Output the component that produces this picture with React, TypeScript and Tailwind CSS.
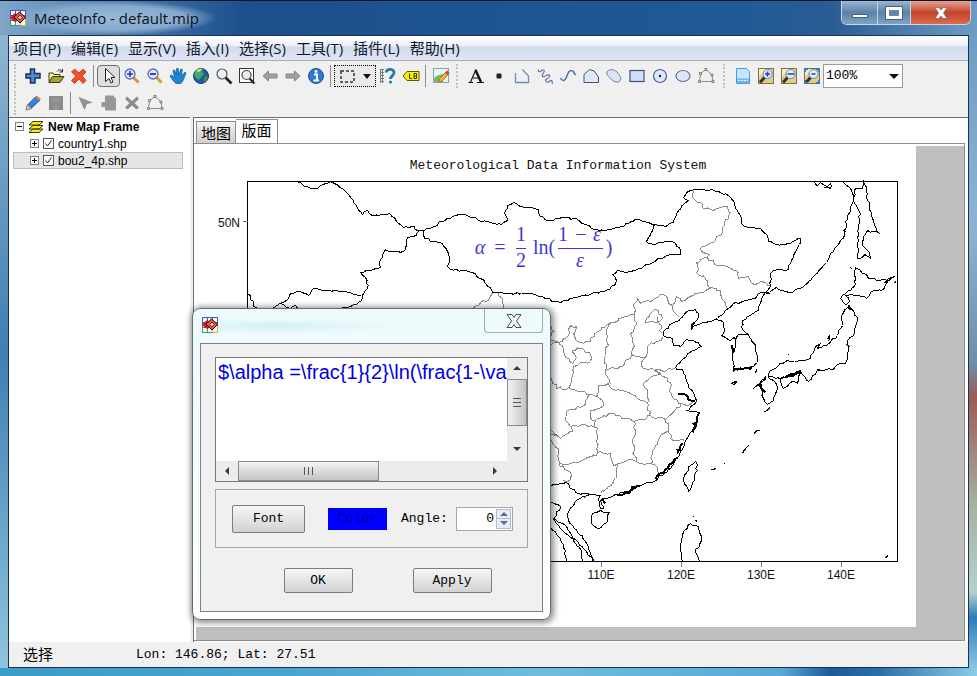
import React, { PropsWithChildren, ReactNode } from 'react'
import clsx from 'clsx'

type Tool = { name: string; icon: ReactNode; active?: boolean }

const menus = ['项目(P)', '编辑(E)', '显示(V)', '插入(I)', '选择(S)', '工具(T)', '插件(L)', '帮助(H)']

const Icon: React.FC<PropsWithChildren> = ({ children }: PropsWithChildren) => (
  <svg viewBox="0 0 18 18" className="w-[18px] h-[18px]" fill="none" aria-hidden="true">
    {children}
  </svg>
)

const AppIcon: React.FC = () => (
  <svg viewBox="0 0 16 16" className="w-4 h-4 shrink-0" aria-hidden="true">
    <rect width="16" height="16" fill="#f4f4ff" />
    <path d="M0 .5h16M.5 0v16M5.500 0v16M10.500 0v16M15.500 0v16M0 5.500h16" stroke="#4a58b8" />
    <path d="M0 10.500h8M0 15.500h10M.5 9v7M5.500 9v7" stroke="#3aa05a" />
    <path d="M10 15.500h6M15.500 9v7M10.500 11v5" stroke="#d0b040" />
    <path d="M0 7.500 5 3l4 3-3 6-3-1z" fill="#c81838" />
    <path d="M4 7 9.500 2l6 5.500L10 13z" fill="#e85a40" stroke="#2a0808" />
    <path d="M7.500 7.500 10 5l2.500 2.500L10 10z" fill="#f8b8a0" stroke="#803020" />
  </svg>
)

const glass = (x: number, y: number, sign: ReactNode) => (
  <>
    <path d={`M${x + 3} ${y + 3}l5.500 5.500`} stroke="#d89a28" strokeWidth="3" />
    <circle cx={x} cy={y} r="5" fill="#dfe6fb" stroke="#5a6ec8" strokeWidth="1.300" />
    {sign}
  </>
)

const nodesShape = (
  <>
    <path d="M2.500 14.500 3.500 6.500 9 2.500l6 5.500 1 6.500z" stroke="#8d8d8d" />
    <path
      d="M1.500 13.500h2v2h-2zM2.500 5.500h2v2h-2zM8 1.500h2v2H8zM14 7h2v2h-2zM15 13.500h2v2h-2z"
      fill="#f4f4f4"
      stroke="#7d7d7d"
    />
  </>
)

const framedGlass = (sign: ReactNode) => (
  <>
    <rect x="1.500" y="1.500" width="15" height="15" fill="#e0cc82" stroke="#7b7248" />
    <path d="M2 2h7L2 10z" fill="#f6efc0" />
    <path d="M3 15.500 8 10" stroke="#33332a" strokeWidth="3" />
    <circle cx="10.500" cy="7" r="4.500" fill="#e2ecff" stroke="#7183b8" />
    {sign}
  </>
)

const fileTools: Tool[] = [
  {
    name: 'New layer',
    icon: <path d="M6.500 2h4v4.500H16v4.500h-5v5H6.500v-5H2V7h4.500z" fill="#4a90d8" stroke="#1d2f55" strokeWidth="1.500" />,
  },
  {
    name: 'Open',
    icon: (
      <>
        <path d="M2 15V6h4l1 1.500h6V9" fill="#f6ee9a" stroke="#3c3a10" />
        <path d="M2 15.500 5.500 9.500H17l-4 6z" fill="#a8a228" stroke="#3c3a10" />
        <path d="M10 4.500c2-2.500 4-2 5 0M15.500 2v3h-3" stroke="#222" />
      </>
    ),
  },
  {
    name: 'Remove',
    icon: <path d="m4.500 2 4.500 4 4-4 3 3-4 4 4 4.500-3 3-4-4.500-4.500 4.500-3-3L6 9 1.500 5z" fill="#f0502c" stroke="#d84020" />,
  },
]

const mapTools: Tool[] = [
  {
    name: 'Select',
    active: true,
    icon: <path d="M5.500 1.500v13L9 11.500l2 4.500 2-1-2-4.500h4z" fill="#fff" stroke="#222" />,
  },
  { name: 'Zoom in', icon: glass(7, 7, <path d="M7 4v6M4 7h6" stroke="#2338a8" strokeWidth="1.600" />) },
  { name: 'Zoom out', icon: glass(7, 7, <path d="M4 7h6" stroke="#2338a8" strokeWidth="1.800" />) },
  {
    name: 'Pan',
    icon: (
      <path
        d="M7 16.500C5 15 2.500 11.500 1 9l1.500-1L5.500 10 4 3.500l1.700-.5L7.500 8V1.500h1.800L10 8l1.700-6 1.600.5L12.500 9 16 5l1 1.200c-1.500 3-2.500 8-5 10.300z"
        fill="#1e86d0"
        stroke="#0e5c9c"
        strokeWidth=".7"
      />
    ),
  },
  {
    name: 'Full extent',
    icon: (
      <>
        <circle cx="9" cy="9" r="7.500" fill="#2458a8" stroke="#1a3a70" />
        <path d="M3 5c2-3 6-4 8-3l-1 3 2 2-3 3-2 3-3-2-2-3z" fill="#3fae58" />
        <path d="m12 10 4-1c0 3-2 6-4 6z" fill="#38904c" />
        <path d="M4 4c2-2 4-2.500 6-2L7 5z" fill="#b6ecc0" />
      </>
    ),
  },
  {
    name: 'Zoom to layer',
    icon: (
      <>
        <path d="m10.500 10.500 6 6" stroke="#222" strokeWidth="2.600" />
        <circle cx="7" cy="7" r="5" fill="#e9f2f8" stroke="#555" strokeWidth="1.200" />
      </>
    ),
  },
  {
    name: 'Zoom to extent',
    icon: (
      <>
        <rect x="1.500" y="1.500" width="14" height="14" fill="#fff" stroke="#333" />
        <path d="m11 11 5.500 5.500" stroke="#222" strokeWidth="2.200" />
        <circle cx="8.500" cy="8" r="4.500" fill="#e3ecef" stroke="#444" strokeWidth="1.200" />
      </>
    ),
  },
  { name: 'Back', icon: <path d="M2 9l5.500-5v3H16v4H7.500v3z" fill="#a2a2a2" stroke="#858585" /> },
  { name: 'Forward', icon: <path d="M16 9l-5.500-5v3H2v4h8.500v3z" fill="#a2a2a2" stroke="#858585" /> },
  {
    name: 'Identify',
    icon: (
      <>
        <circle cx="9" cy="9" r="7.500" fill="#2f76d4" stroke="#1b4f9e" />
        <path d="M7 7.500h3V13M6.500 13.500h5.500" stroke="#fff" strokeWidth="2" />
        <circle cx="9" cy="4.500" r="1.400" fill="#fff" />
      </>
    ),
  },
]

const labelTools: Tool[] = [
  {
    name: 'Measure',
    icon: (
      <>
        <path d="M1.500 2v14M3.500 2v14M1 2.500h4M1 5.500h4M1 8.500h4M1 11.500h4M1 14.500h4" stroke="#6f8288" />
        <path d="M7 5.500C8 1 15.500 1.500 15 6c-.3 2.500-3.500 3-3.500 6" stroke="#1f7fa8" strokeWidth="2.800" />
        <circle cx="11.500" cy="15" r="1.600" fill="#1f7fa8" />
      </>
    ),
  },
  {
    name: 'Label',
    icon: (
      <>
        <path d="M1 9l4-4.500h12v9H5z" fill="#f8f000" stroke="#5a5600" />
        <path d="M7.500 6.500v5H10M12 6.500v5h2.500v-5zM12 9h2.500" stroke="#333" />
      </>
    ),
  },
]

const imageTools: Tool[] = [
  {
    name: 'Edit image',
    icon: (
      <>
        <rect x="1.500" y="1.500" width="15" height="14" fill="#eaf5fb" stroke="#8d9ea8" />
        <path d="M2 11c4-4 6-3 9-4v8H2z" fill="#6fc06a" />
        <path d="m6.500 14.500 1-3 7-7 2.500 2-7.500 8z" fill="#f4b932" stroke="#a8701c" />
        <path d="m13 6 2-2.500 2.500 2-2 2.500z" fill="#d8423a" />
      </>
    ),
  },
]

const drawTools: Tool[] = [
  {
    name: 'Text',
    icon: (
      <>
        <path d="M1.500 15.500H6M10 15.500h7M3.500 15 9 2.500M6 11h6" stroke="#111" strokeWidth="1.200" />
        <path d="M8.500 3 14 15" stroke="#111" strokeWidth="2.400" />
      </>
    ),
  },
  { name: 'Point', icon: <rect x="6.500" y="6.500" width="5" height="5" rx="1" fill="#222" /> },
  { name: 'Polyline', icon: <path d="M2.500 6v9.500h13V9L9.500 2.500" stroke="#6f8cc0" strokeWidth="1.300" /> },
  {
    name: 'Freehand',
    icon: (
      <path
        d="M2.500 2.500c-1 2 1 3 2.500 1.500s4-1.500 3 1-3 3-1.500 4.500S11 7 13 8s-.5 3-2.500 4 0 4 2 3 3-2.500 3.500-1-.5 2.500 1 2"
        stroke="#4f6f98"
        strokeWidth="1.100"
      />
    ),
  },
  { name: 'Curve', icon: <path d="M1.500 11c2 4 4.500 3 6-1s3-8 6-6c2 1 2 3 3 4" stroke="#4470b8" strokeWidth="1.500" /> },
  { name: 'Polygon', icon: <path d="M2 15.500V7.500l5.500-5L12 4l4.500 6v5.500z" fill="#dfe8f8" stroke="#44516e" /> },
  {
    name: 'Curve polygon',
    icon: <path d="M2 5c1-3 7-3 10 0s5 7 3 9-6 1-8-1-6-5-5-8z" fill="#dbe4f6" stroke="#6b7da8" />,
  },
  { name: 'Rectangle', icon: <rect x="2" y="3.500" width="14" height="11" fill="#d3def5" stroke="#3b4f8c" strokeWidth="1.200" /> },
  {
    name: 'Circle',
    icon: (
      <>
        <circle cx="9" cy="9" r="6.500" fill="#dde6f8" stroke="#4b5f92" strokeWidth="1.200" />
        <circle cx="9" cy="9" r="1.200" fill="#223" />
      </>
    ),
  },
  { name: 'Ellipse', icon: <ellipse cx="9" cy="9" rx="7" ry="5.500" fill="#dde6f8" stroke="#5c6c98" strokeWidth="1.200" /> },
  { name: 'Edit vertices', icon: nodesShape },
]

const layoutTools: Tool[] = [
  {
    name: 'Page setup',
    icon: (
      <>
        <path d="M2.500 1.500h10l3 3v12h-13z" fill="#c8e6fb" stroke="#4a9be0" />
        <path d="M3 11.500h12v4.500H3z" fill="#6fb4ee" />
        <path d="M4 13.500h10" stroke="#e6f4ff" strokeDasharray="2 1" />
      </>
    ),
  },
  { name: 'Page zoom in', icon: framedGlass(<path d="M10.500 4.500v5M8 7h5" stroke="#1f3cc0" strokeWidth="1.600" />) },
  { name: 'Page zoom out', icon: framedGlass(<path d="M7.500 7H14" stroke="#2a62b8" strokeWidth="1.800" />) },
  {
    name: 'Fit page',
    icon: framedGlass(
      <path d="M2 5V2h3M16 5V2h-3M2 13v3h3M16 13v3h-3M8.500 7h4" stroke="#3a7ab8" strokeWidth="1.800" />,
    ),
  },
]

const editTools: Tool[] = [
  {
    name: 'Toggle editing',
    icon: (
      <>
        <path d="m2 16 1.500-5L12 2.500 16 6l-9 8.500z" fill="#2f86dc" stroke="#1d5ca0" />
        <path d="m2 16 1.500-5 3.500 3.500z" fill="#f1c48a" stroke="#b98038" strokeWidth=".6" />
        <path d="m11.500 3 1.500-1.500 4 3.500-1.500 1.500z" fill="#f08848" />
      </>
    ),
  },
  {
    name: 'Save edits',
    icon: (
      <>
        <rect x="2" y="2" width="14" height="14" fill="#8b8b8b" />
        <path d="M5 3h8v5H5zM6 11h6v5H6z" fill="#949494" />
      </>
    ),
  },
]

const featureTools: Tool[] = [
  { name: 'Edit feature', icon: <path d="M1.500 3 16 8.500 10 10l-2.500 6z" fill="#8f8f8f" /> },
  { name: 'New feature', icon: <path d="M5 1.500h8l3 3v12H5V13H1.500V8H5z" fill="#979797" /> },
  {
    name: 'Delete feature',
    icon: <path d="m4 2.500 5 4.500 5-4.500L16 5l-4.500 4 4.500 4.500-2.500 2L9 11.500l-4.500 4-2.500-2L6.500 9 2 5z" fill="#8b8b8b" />,
  },
  { name: 'Feature vertices', icon: nodesShape },
]

const ToolGroup: React.FC<{ tools: Tool[] }> = ({ tools }) => (
  <div className="flex shrink-0">
    {tools.map((tool) => (
      <button
        key={tool.name}
        aria-label={tool.name}
        className={clsx(
          'w-[23px] h-[22px] flex items-center justify-center',
          tool.active && 'rounded-sm border border-[#6e6e6e] bg-[#dedede]',
        )}
      >
        <Icon>{tool.icon}</Icon>
      </button>
    ))}
  </div>
)

const Grip: React.FC = () => <div className="w-1 h-6 shrink-0 border-l-2 border-dotted border-[#c0c0c0]" />

const Separator: React.FC = () => <div className="w-px h-[22px] mx-[3px] shrink-0 bg-[#8e8e8e]" />

const coasts = [
  '289,181 300,182 307,186 310,188 317,188 323,184 330,181 334,183 342,188 350,197 357,208 362,214 367,210 372,215 384,214 389,213 394,217 396,221 403,227 414,226 417,230 424,230 434,226 441,221 452,216 462,214 475,217 478,220 490,222 501,224 507,220 504,212 507,205 513,202 522,206 530,207 538,209 540,216 547,220 558,218 565,217 577,219 585,224 594,229 605,230 618,227 628,223 638,219 648,222 655,224 665,226 673,222 676,213 684,203 688,200 683,197 686,192 690,190 700,189 712,189 718,191 728,195 734,204 740,215 742,224 750,227 760,228 767,235 768,241 775,244 785,244 795,240 800,238 799,244 794,253 790,263 786,270 780,269 773,270 770,273 770,285 765,292 758,293 755,298 746,300 738,303 735,302 728,308 717,318',
  '424,230 423,235 430,241 442,243 447,251 449,260 447,266 450,269 462,270 472,272 484,280 492,292 510,293 530,293 545,298 560,302 575,297 590,294 604,291 614,285 616,280 612,274 617,270 625,272 635,270 650,263 660,258 670,254 680,254 680,250 675,243 668,241 655,244 648,243 646,241 650,233 654,224',
  '419,230 413,236 406,239 405,250 400,252 385,250 385,249 379,262 380,267 375,268 360,272 365,277 367,288 362,295 361,300 350,306 340,308',
  '361,295 345,291 325,290 313,288 308,295 298,291 290,293 288,298 278,304 272,308',
  '247,290 250,299 255,307 265,308',
  '281,303 290,308 295,305 299,309',
  '770,291 776,287 782,290 792,292 802,287 812,277 826,262 830,253 840,240 844,235 845,221 850,208 853,200 851,190 848,186 842,181',
  '853,200 859,211 858,235 857,258 860,258 864,254 870,258 869,252 862,245 863,236 867,230 879,233 874,225 871,213 867,200 866,190 863,181 862,188 855,188 853,200',
  '814,181 817,185 820,182 826,186 830,183 830,188 824,187',
  '855,267 855,284 850,290 843,294 840,298 845,304 849,301 845,295 850,294 858,295 866,298 870,292 884,288 888,280 880,280 868,278 860,270 855,267',
  '884,283 888,278 894,276 886,281 884,283',
  '847,307 841,315 842,325 837,335 828,343 817,348 819,344 815,346 808,359 785,361 770,370 768,376 780,378 800,370 803,375 808,381 816,371 818,369 833,369 836,365 845,363 847,358 848,350 847,340 854,333 857,320 852,309 847,307',
  '768,377 775,382 777,388 773,400 767,404 763,398 761,388 758,384 765,376',
  '780,378 783,388 792,381 797,383 800,373 790,374 780,378',
  '765,292 760,303 758,310 742,320 741,326 748,334 755,347 757,362 753,366 740,368 733,371 733,362 732,352 735,343 734,337 730,340 721,335 724,330 723,322 716,319',
  '735,340 738,334 748,334',
  '717,318 705,322 695,325 691,329 694,322 698,316 695,309 688,310 680,318 672,323 663,331 663,335 672,338 673,345 680,346 686,339 698,342 701,346 692,350 683,358 675,367 683,371 688,384 693,393 696,400 695,403 687,410 698,412 695,425 685,440 679,455 672,465 655,480 640,485 630,490 618,494 605,498 600,500 603,508 600,508 598,500 600,495 590,494 577,499 567,513 568,520 577,532 585,541 593,561',
  '695,461 690,465 683,480 688,491 694,480 697,464 695,461',
  '592,513 591,523 598,528 605,523 609,512 600,510 592,513',
  '682,561 680,547 684,530 690,523 698,526 701,540 695,552 699,561',
  '551,485 565,482 575,492 590,494',
  '551,502 560,506 556,515 553,518 565,525 572,537 585,550 593,561',
  '553,518 560,528 570,537 581,550 582,561',
  '551,528 558,536 565,550 566,561',
]

// drawn wider than the borders, these are the ragged bits of shoreline
const ragged = [
  '678,393 687,396 695,400',
  '699,412 696,422 692,432',
  '682,443 678,453',
  '677,457 668,466 655,479',
  '640,486 632,486 629,492 616,494',
  '733,370 740,368 751,366',
  '760,384 765,392',
  '848,305 852,308',
  '769,292 766,293',
  '603,498 605,503',
  '691,326 694,322',
  '732,345 734,352',
  '785,376 800,371',
  '816,369 819,369',
]

const provinces = [
  '473,308 480,302 488,300 492,292',
  '498,292 502,301 503,308',
  '693,191 692,197 700,202 706,208 715,209 724,206 730,212 724,222 722,232 715,240 708,244 700,248 703,252 709,254 706,257 696,262 698,274 707,280 709,288 700,292 690,296 681,301 676,296 672,305 668,303 666,296 660,294 650,301 640,303 637,298 634,303 634,314 625,316 611,322 607,324 597,331 590,341 580,342 574,335 576,326 570,325 568,335 562,341 551,344',
  '707,257 714,264 725,266 736,270 738,278 748,276 754,284 762,281 770,285',
  '709,288 720,290 723,300 727,308',
  '672,306 674,312 679,317',
  '611,322 606,330 608,345 605,355 605,370 610,384',
  '634,314 636,322 630,333 634,345 631,354 622,366 605,370',
  '631,354 645,357 648,345 662,337',
  '645,357 641,365 654,370 665,371 675,367',
  '645,322 652,311 658,310 662,318 655,322 645,322',
  '657,317 661,325 659,330 662,333',
  '551,326 554,331 551,336',
  '551,340 562,345 564,355 572,363 576,357 572,350 580,348 589,352 590,361 573,366 572,375 568,387',
  '551,378 556,388 568,387 580,391 597,396 602,400 602,406 590,410 592,420 595,420',
  '597,396 598,385 608,383 612,389 630,393 640,400 647,402 649,415',
  '654,370 660,373 653,375 643,383 647,392 649,402',
  '654,370 670,382 670,392 678,403 688,405 695,400',
  '595,420 610,413 625,418 633,421 635,430 632,440 634,455 636,461',
  '633,421 650,415 665,419 675,410 680,404',
  '665,419 668,430 660,435 655,445 650,463 657,467 658,477',
  '668,430 673,440 684,441',
  '595,420 597,450 596,455 585,458 570,463 560,463',
  '588,395 585,404 566,411 565,420 570,426 585,424 595,427',
  '551,430 560,438 572,431 570,426',
  '551,440 558,448 559,463 570,472 569,480 563,480',
  '551,434 558,436',
  '597,452 610,453 613,465 632,459 637,462 650,463',
  '617,465 615,478 608,486 600,493',
]

const islets = [
  '732,382 736,381 734,384 731,383',
  '827,339 829,335 829,339 827,341',
  '787,354 788,354',
  '755,373 756,369',
  '764,411 767,410 769,407',
  '753,434 756,430 759,430',
  '742,453 745,448 748,445',
  '723,464 724,463',
  '710,469 716,468',
  '692,517 693,516',
  '695,520 697,521',
  '885,558 887,555',
  '752,389 760,383 766,378',
  '850,267 852,269',
  '894,282 896,281',
]

// Splits every segment into short steps and nudges them, so borders look surveyed
const roughen = (line: string, amount: number) => {
  const pts = line.split(' ').map((p) => p.split(',').map(Number))
  const out: string[] = [`M${pts[0][0]} ${pts[0][1]}`]
  let seed = pts[0][0] * 31 + pts[0][1] * 17
  const noise = () => {
    seed = (seed * 16807) % 2147483647
    return (seed / 2147483647 - 0.5) * 2 * amount
  }
  for (let i = 1; i < pts.length; i++) {
    const [x0, y0] = pts[i - 1]
    const [x1, y1] = pts[i]
    const steps = Math.max(1, Math.round(Math.hypot(x1 - x0, y1 - y0) / 3))
    for (let s = 1; s < steps; s++) {
      const t = s / steps
      out.push(`L${(x0 + (x1 - x0) * t + noise()).toFixed(1)} ${(y0 + (y1 - y0) * t + noise()).toFixed(1)}`)
    }
    out.push(`L${x1} ${y1}`)
  }
  return out.join('')
}

const MapPage: React.FC = () => (
  <svg viewBox="196 146 720 481" preserveAspectRatio="xMinYMin meet" className="block w-full h-full bg-white">
    <text x="558" y="169" textAnchor="middle" className="font-['Liberation_Mono',monospace] text-[13px]" fill="#111">
      Meteorological Data Information System
    </text>
    <g fill="none" shapeRendering="crispEdges" transform="translate(.5 .5)">
      {provinces.map((line) => (
        <path key={line} d={roughen(line, 1.6)} stroke="#8a8a8a" />
      ))}
      {coasts.map((line) => (
        <path key={line} d={roughen(line, 1.1)} stroke="#000" />
      ))}
      {ragged.map((line) => (
        <path key={line} d={roughen(line, 2)} stroke="#000" strokeWidth="2" />
      ))}
      {islets.map((line) => (
        <path key={line} d={roughen(line, 0.6)} stroke="#000" strokeWidth="1.200" />
      ))}
      <rect x="247" y="181" width="650" height="380" stroke="#000" />
      <path d="M242 221h5M601 561v5M681 561v5M761 561v5M841 561v5" stroke="#777" />
    </g>
    <g className="font-['Liberation_Sans',sans-serif] text-xs" fill="#111">
      <text x="240" y="227" textAnchor="end">50N</text>
      <text x="601" y="579" textAnchor="middle">110E</text>
      <text x="681" y="579" textAnchor="middle">120E</text>
      <text x="761" y="579" textAnchor="middle">130E</text>
      <text x="841" y="579" textAnchor="middle">140E</text>
    </g>
    <g className="font-['Liberation_Serif',serif] text-[20px]" fill="#3f38d8" textAnchor="middle">
      <text x="480" y="254" className="italic">α</text>
      <text x="500" y="254">=</text>
      <text x="521" y="241">1</text>
      <text x="521" y="267">2</text>
      <text x="544" y="254">ln(</text>
      <text x="563" y="241">1</text>
      <text x="581" y="241">−</text>
      <text x="597" y="241" className="italic">ε</text>
      <text x="580" y="267" className="italic">ε</text>
      <text x="609" y="254">)</text>
      <path d="M516 248.500h10M558 248.500h45" stroke="#3f38d8" />
    </g>
  </svg>
)

const layers = ['country1.shp', 'bou2_4p.shp']

const Expander: React.FC<{ open?: boolean }> = ({ open }) => (
  <svg viewBox="0 0 9 9" className="w-[9px] h-[9px] shrink-0" fill="none" aria-hidden="true">
    <rect x=".5" y=".5" width="8" height="8" fill="#fff" stroke="#808080" />
    <path d={open ? 'M2 4.500h5' : 'M2 4.500h5M4.500 2v5'} stroke="#000" />
  </svg>
)

const LayerTree: React.FC = () => (
  <aside className="w-[181px] shrink-0 border-t border-[#6e6e6e] bg-white font-['Liberation_Sans',sans-serif] text-xs text-black">
    <div className="flex items-center h-[17px] pl-1.5">
      <Expander open />
      <svg viewBox="0 0 16 14" className="w-4 h-3.5 ml-1 mr-1 shrink-0" aria-hidden="true">
        <path
          d="M1 12.500 5 9h10l-4 3.500zM1 9 5 5.500h10L11 9zM1 5l4-3.500h10L11 5z"
          fill="#f6ee1c"
          stroke="#3c3800"
        />
      </svg>
      <span className="font-bold">New Map Frame</span>
    </div>
    {layers.map((layer, i) => (
      <div
        key={layer}
        className={clsx(
          'flex items-center h-[17px] ml-1 mr-[7px] pl-[17px]',
          i === 1 && 'bg-[#e6e6e6] outline-1 -outline-offset-1 outline-[#bdbdbd]',
        )}
      >
        <Expander />
        <label className="flex items-center ml-1 gap-1">
          <span className="relative flex">
            <input
              type="checkbox"
              defaultChecked
              className="appearance-none w-[11px] h-[11px] border border-[#555] bg-white"
            />
            <svg viewBox="0 0 11 11" className="absolute inset-0 w-[11px] h-[11px]" fill="none" aria-hidden="true">
              <path d="M2.500 5.500 4.500 8l4-5.500" stroke="#222" />
            </svg>
          </span>
          {layer}
        </label>
      </div>
    ))}
  </aside>
)

const TitleBar: React.FC = () => (
  <header className="flex h-[34px] shrink-0 items-start pl-2.5 pr-1.5 bg-[linear-gradient(to_right,#7fa6c8,#4a7cb0_12%,#1c4f8c_25%,#1f5a96_75%,#2a5c94_85%,#6f9cc4)]">
    <div className="flex items-center h-[34px] gap-2 pr-4 bg-[radial-gradient(ellipse_at_center,#98b8d6_0%,#86aacd_50%,transparent_72%)]">
      <AppIcon />
      <h1 className="font-['Open_Sans',sans-serif] text-[15px] text-[#0b1220]">MeteoInfo - default.mip</h1>
    </div>
    <div className="flex ml-auto h-6 rounded-b-md border border-t-0 border-[#c5d8ea] overflow-hidden">
      <button
        aria-label="Minimize"
        className="w-9 border-r border-[#c5d8ea] bg-linear-to-b from-[#9bb6d1] via-[#5b82ab] to-[#7fa3c6] flex items-end justify-center pb-1.5"
      >
        <span className="w-4 h-1 bg-white border border-[#4b5f78]" />
      </button>
      <button
        aria-label="Maximize"
        className="w-[33px] border-r border-[#c5d8ea] bg-linear-to-b from-[#9bb6d1] via-[#5b82ab] to-[#7fa3c6] flex items-center justify-center"
      >
        <span className="w-4 h-3 border-[3px] border-white outline-1 outline-[#4b5f78]" />
      </button>
      <button
        aria-label="Close"
        className="w-[59px] bg-linear-to-b from-[#e2a294] via-[#c5432a] to-[#dc6a48] flex items-center justify-center"
      >
        <svg viewBox="0 0 14 12" className="w-3.5 h-3" aria-hidden="true">
          <path d="M1 .5h4L7 3 9 .5h4L9.500 6l3.500 5.500H9L7 9l-2 2.500H1L4.500 6z" fill="#fff" stroke="#8d5a5a" strokeWidth=".7" />
        </svg>
      </button>
    </div>
  </header>
)

const Toolbars: React.FC = () => (
  <div className="shrink-0 h-14 bg-[#f0f0f0] pl-[5px] pt-[3px] flex flex-col gap-[3px]">
    <div className="flex items-center h-6">
      <Grip />
      <div className="flex items-center pl-[3px]">
        <ToolGroup tools={fileTools} />
        <Separator />
        <ToolGroup tools={mapTools} />
        <Separator />
        <button
          aria-label="Select by rectangle"
          className="flex items-center justify-center gap-2 w-[42px] h-[22px] border border-dotted border-black bg-[#e9e9e9]"
        >
          <svg viewBox="0 0 15 13" className="w-[15px] h-[13px]" fill="none" aria-hidden="true">
            <rect x="1" y="1" width="13" height="11" stroke="#333" strokeWidth="1.500" strokeDasharray="3 2" />
          </svg>
          <svg viewBox="0 0 8 5" className="w-2 h-[5px]" aria-hidden="true">
            <path d="M0 0h8L4 5z" fill="#111" />
          </svg>
        </button>
        <ToolGroup tools={labelTools} />
        <Separator />
        <ToolGroup tools={imageTools} />
      </div>
      <div className="flex items-center pl-1">
        <Grip />
        <div className="flex pl-1">
          <ToolGroup tools={drawTools} />
        </div>
      </div>
      <div className="flex items-center pl-1.5">
        <Grip />
        <div className="flex pl-1">
          <ToolGroup tools={layoutTools} />
        </div>
      </div>
      <div className="relative flex items-center">
        <select
          aria-label="Page zoom"
          className="appearance-none w-20 h-6 pl-0.5 border border-[#9a9a9a] bg-white font-['Liberation_Mono',monospace] text-[13px] text-black"
        >
          <option>100%</option>
        </select>
        <svg viewBox="0 0 10 5" className="absolute right-1 w-2.5 h-[5px] pointer-events-none" aria-hidden="true">
          <path d="M0 0h10L5 5z" fill="#111" />
        </svg>
      </div>
    </div>
    <div className="flex items-center h-6">
      <Grip />
      <div className="flex items-center pl-[3px]">
        <ToolGroup tools={editTools} />
        <Separator />
        <ToolGroup tools={featureTools} />
      </div>
    </div>
  </div>
)

const arrowPaths = { up: 'M0 5h8L4 1z', down: 'M0 1h8L4 5z', left: 'M6 0v8L2 4z', right: 'M2 0v8l4-4z' }

const Arrow: React.FC<{ dir: keyof typeof arrowPaths }> = ({ dir }) => (
  <svg viewBox="0 0 8 8" className="w-2 h-2" fill="#3a3a3a" aria-hidden="true">
    <path d={arrowPaths[dir]} />
  </svg>
)

const DialogButton: React.FC<PropsWithChildren<{ className?: string }>> = ({ children, className }) => (
  <button
    className={clsx('rounded-xs border border-[#7c7c7c] bg-linear-to-b from-[#f6f6f6] to-[#d2d2d2]', className)}
  >
    {children}
  </button>
)

const LabelDialog: React.FC = () => (
  <div
    role="dialog"
    className="absolute left-[192px] top-[307px] w-[359px] flex flex-col px-[7px] pb-[7px] rounded-lg border border-[#5f6e74] bg-linear-to-b from-[#eefafc] to-white shadow-[1px_1px_6px_2px_rgba(0,0,0,0.45)] font-['Liberation_Mono',monospace] text-[13px] text-black"
  >
    <div className="flex justify-between h-[34px] pl-[2px] bg-[radial-gradient(ellipse_at_22%_50%,#d2f0f6_0%,transparent_32%)]">
      <div className="pt-2">
        <AppIcon />
      </div>
      <button
        aria-label="Close dialog"
        className="w-[59px] h-6 rounded-b-sm border border-t-0 border-[#9caeb4] flex items-center justify-center"
      >
        <svg viewBox="0 0 16 14" className="w-4 h-3.5" aria-hidden="true">
          <path
            d="M1 .5h5L8 3.500 10 .5h5L10.500 7l4.500 6.500h-5L8 10.500 6 13.500H1L5.500 7z"
            fill="#f8f8f8"
            stroke="#444c50"
          />
        </svg>
      </button>
    </div>
    <div className="border border-[#7b8284] bg-[#f0f0f0] px-3.5 pt-[13px] pb-[18px]">
      <div className="flex flex-col h-[125px] border border-[#76797c]">
        <div className="flex flex-1 min-h-0">
          <textarea
            aria-label="Label text"
            wrap="off"
            defaultValue={'$\\alpha =\\frac{1}{2}\\ln(\\frac{1-\\va'}
            className="flex-1 min-w-0 resize-none overflow-hidden bg-white pl-0.5 font-['Liberation_Sans',sans-serif] text-[20px] leading-7 text-[#0000e6]"
          />
          <div className="flex flex-col items-center w-5 bg-[#ececec]">
            <div className="h-[21px] flex items-center">
              <Arrow dir="up" />
            </div>
            <div className="w-full h-[47px] border border-[#8a8a8a] bg-linear-to-r from-[#f4f4f4] to-[#c4c4c4] flex flex-col items-center justify-center gap-[3px]">
              <span className="w-2 h-px bg-[#555]" />
              <span className="w-2 h-px bg-[#555]" />
              <span className="w-2 h-px bg-[#555]" />
            </div>
            <div className="flex-1 flex items-center pt-3">
              <Arrow dir="down" />
            </div>
          </div>
        </div>
        <div className="flex h-5 bg-[#ececec] pr-5">
          <div className="w-[22px] flex items-center justify-center">
            <Arrow dir="left" />
          </div>
          <div className="w-[141px] border border-[#8a8a8a] bg-linear-to-b from-[#f4f4f4] to-[#c4c4c4] flex items-center justify-center gap-[3px]">
            <span className="w-px h-2 bg-[#555]" />
            <span className="w-px h-2 bg-[#555]" />
            <span className="w-px h-2 bg-[#555]" />
          </div>
          <div className="flex-1 flex items-center justify-end pr-2">
            <Arrow dir="right" />
          </div>
        </div>
      </div>
      <div className="mt-[7px] h-[59px] flex items-center border border-[#a6a6a6] pl-4 pr-3.5">
        <DialogButton className="w-[73px] h-7">Font</DialogButton>
        <button className="ml-[23px] w-[59px] h-[22px] bg-[#0000ff] text-[#000090]">Color</button>
        <label htmlFor="angle" className="ml-3.5">
          Angle:
        </label>
        <div className="ml-auto flex items-center w-[57px] h-6 border border-[#a6a6a6] bg-white">
          <input id="angle" defaultValue="0" className="flex-1 min-w-0 text-right pr-0.5" />
          <div className="flex flex-col justify-between w-[15px] h-5 mr-px border border-[#b4bccb] bg-[#e8edf5]">
            <button
              aria-label="Increase angle"
              className="flex-1 flex items-center justify-center border-b border-[#b4bccb]"
            >
              <svg viewBox="0 0 8 4" className="w-2 h-1" aria-hidden="true">
                <path d="M0 4h8L4 0z" fill="#5a6c8c" />
              </svg>
            </button>
            <button aria-label="Decrease angle" className="flex-1 flex items-center justify-center">
              <svg viewBox="0 0 8 4" className="w-2 h-1" aria-hidden="true">
                <path d="M0 0h8L4 4z" fill="#5a6c8c" />
              </svg>
            </button>
          </div>
        </div>
      </div>
      <div className="mt-5 flex justify-center gap-[60px] pl-8">
        <DialogButton className="w-[69px] h-[25px]">OK</DialogButton>
        <DialogButton className="w-[79px] h-[25px]">Apply</DialogButton>
      </div>
    </div>
  </div>
)

const App: React.FC = () => (
  <div className="relative h-screen min-h-[640px] flex flex-col overflow-hidden border-t border-[#0a1530] bg-[#1d5291]">
    <TitleBar />
    <div className="flex-1 min-h-0 flex">
      <div className="w-2 shrink-0 bg-linear-to-b from-[#8fb6d2] via-[#3f7fb0] to-[#8fc4de]" />
      <div className="flex-1 min-w-0 flex flex-col border border-[#1c3352] bg-[#f0f0f0]">
        <nav className="flex items-center gap-2.5 h-[25px] shrink-0 pl-1 border-b border-[#a9adb8] bg-[linear-gradient(to_bottom,#fff,#eef1f9_40%,#d3daee_45%,#dfe5f5)] font-['Open_Sans','Noto_Sans_CJK_SC',sans-serif] text-[15px] text-[#101828]">
          {menus.map((menu) => (
            <button key={menu} className="whitespace-nowrap">
              {menu}
            </button>
          ))}
        </nav>
        <Toolbars />
        <div className="flex-1 min-h-0 flex gap-[3px]">
          <LayerTree />
          <main className="flex-1 min-w-0 flex flex-col border-t border-l border-[#6e6e6e] bg-white pr-[3px] pb-px">
            <div className="flex items-end h-[25px] shrink-0 pl-0.5 font-['Noto_Sans_CJK_SC',sans-serif] text-[15px] leading-5 text-black">
              <button className="w-10 h-[22px] border border-b-0 border-[#8c8c8c] bg-linear-to-b from-[#f4f4f4] to-[#cfcfcf]">
                地图
              </button>
              <button className="w-[42px] h-6 border border-l-0 border-b-0 border-[#8c8c8c] bg-white pb-1">版面</button>
            </div>
            <div className="flex-1 min-h-0 border border-l-0 border-[#8c8c8c] bg-white pt-[2px] pl-0.5">
              <div className="h-full bg-[#bfbfbf] pr-12 pb-[13px]">
                <MapPage />
              </div>
            </div>
          </main>
        </div>
        <footer className="flex items-center h-[25px] shrink-0 pl-3.5 bg-[#f0f0f0] text-black">
          <span className="w-[113px] font-['Noto_Sans_CJK_SC',sans-serif] text-[15px]">选择</span>
          <span className="font-['Liberation_Mono',monospace] text-[13px]">Lon: 146.86; Lat: 27.51</span>
        </footer>
      </div>
      <div className="w-2 shrink-0 bg-[linear-gradient(to_bottom,#6f9cc4,#8db4d2_30%,#6d8ea8_52%,#9c5a58_57%,#a8b4a4_75%,#b4d0cc_88%,#2f7cb8_92%,#8cc4e4)]" />
    </div>
    <div className="h-2 shrink-0 bg-[linear-gradient(to_right,#3a9cc8,#4aa4d0_30%,#6fbcdc_55%,#5aa8d8_80%,#1c5a98_85%,#2a70a8_90%,#8ccce8)]" />
    <LabelDialog />
  </div>
)

export default App
